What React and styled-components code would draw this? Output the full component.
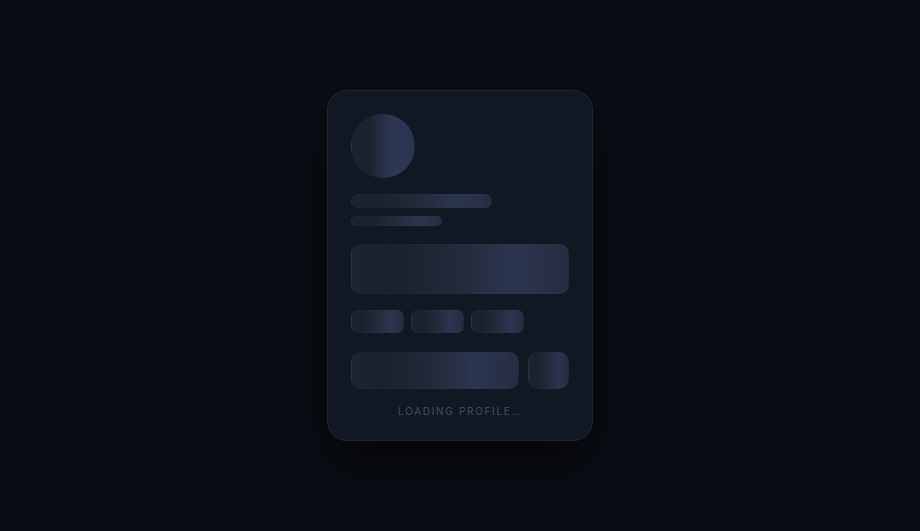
import React from "react";
import styled, { createGlobalStyle } from "styled-components";

const Global = createGlobalStyle`
  html, body { margin: 0; padding: 0; background: #0a0d14; }
  body { font-family: Inter, "Noto Sans", sans-serif; }
  #root { min-height: 100vh; }
`;

const Page = styled.div`
  min-height: 100vh;
  display: flex;
  align-items: center;
  justify-content: center;
  background: #0a0d14;
`;

const Card = styled.div`
  box-sizing: border-box;
  width: 266px;
  padding: 23px 23px 23px;
  border: 1px solid rgba(255, 255, 255, 0.06);
  border-radius: 20px;
  background: #111723;
  box-shadow: 0 26px 50px rgba(0, 0, 0, 0.5);
  display: flex;
  flex-direction: column;
`;

const shimmer = `
  background: linear-gradient(
    90deg,
    #1e2332 0%,
    #1b202d 18%,
    #222939 48%,
    #2c3550 74%,
    #262d42 100%
  );
  border: 1px solid rgba(255, 255, 255, 0.018);
  box-sizing: border-box;
`;

const Avatar = styled.div`
  ${shimmer}
  width: 64px;
  height: 64px;
  border-radius: 50%;
  background: linear-gradient(90deg, #1c2130 0%, #1d2231 28%, #283049 52%, #2e3856 70%, #2a3350 100%);
`;

const Line = styled.div`
  ${shimmer}
  width: ${(p) => p.$w}px;
  height: ${(p) => p.$h}px;
  border-radius: 999px;
  margin-top: ${(p) => p.$mt}px;
`;

const Block = styled.div`
  ${shimmer}
  height: 50px;
  border-radius: 9px;
  margin-top: 18px;
`;

const ChipRow = styled.div`
  display: flex;
  gap: 7px;
  margin-top: 16px;
`;

const Chip = styled.div`
  ${shimmer}
  width: 53px;
  height: 23px;
  border-radius: 7px;
`;

const ActionRow = styled.div`
  display: flex;
  gap: 9px;
  margin-top: 19px;
`;

const Action = styled.div`
  ${shimmer}
  height: 37px;
  border-radius: 10px;
  flex: ${(p) => (p.$grow ? 1 : "0 0 41px")};
`;

const Caption = styled.div`
  margin-top: 16px;
  text-align: center;
  font-size: 10px;
  line-height: 12px;
  letter-spacing: 0.17em;
  color: #465069;
  text-transform: uppercase;
`;

export default function App() {
  return (
    <>
      <Global />
      <Page>
        <Card>
          <Avatar />
          <Line $w={141} $h={14} $mt={16} />
          <Line $w={91} $h={10} $mt={8} />
          <Block />
          <ChipRow>
            <Chip />
            <Chip />
            <Chip />
          </ChipRow>
          <ActionRow>
            <Action $grow />
            <Action />
          </ActionRow>
          <Caption>Loading profile…</Caption>
        </Card>
      </Page>
    </>
  );
}
